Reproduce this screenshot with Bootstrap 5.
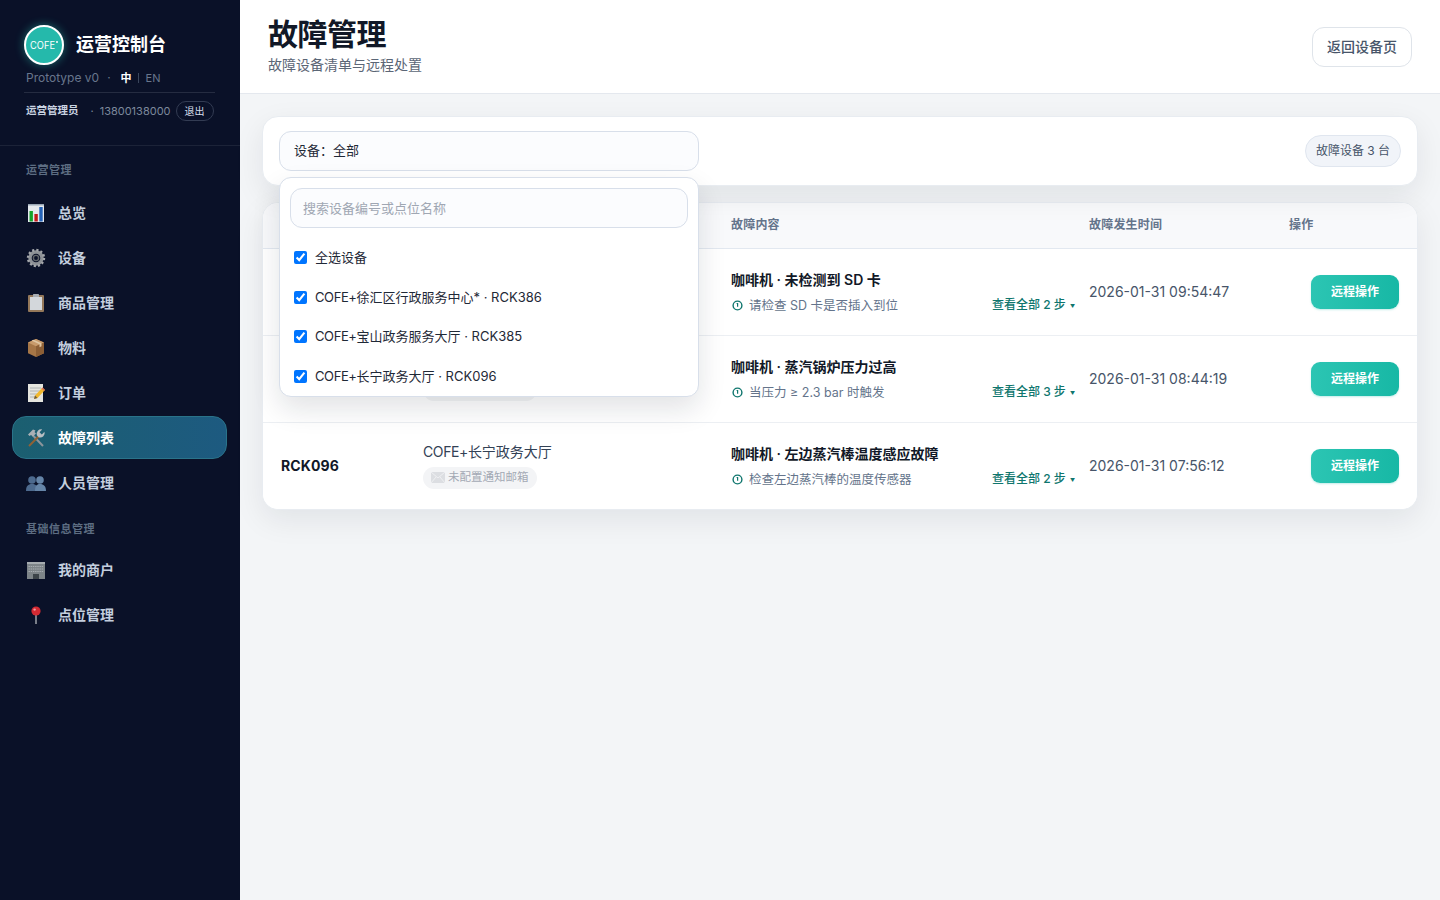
<!doctype html>
<html lang="zh-CN"><head><meta charset="utf-8"><title>故障管理</title>
<link rel="stylesheet" href="https://cdn.jsdelivr.net/npm/bootstrap@5.3.0/dist/css/bootstrap.min.css">
<style>
html,body{height:100%}
body{font-family:Inter,"Noto Sans CJK SC",sans-serif;background:#f3f5f7;color:#111827;min-height:900px;overflow:hidden}
.shell{height:900px}
.side{width:240px;flex:none;background:#0a1128;color:#c3cede}
.brandwrap{height:146px;padding:24px 24px 0;border-bottom:1px solid #1c2338}
.logo{width:40px;height:40px;border-radius:50%;background:#25b9ab;border:2px solid #fff;box-shadow:0 0 10px rgba(45,212,191,.45);flex:none}
.logo text{font-family:Inter,sans-serif;font-size:10px;fill:#fff}
.brandname{font-size:18px;font-weight:700;color:#fff;line-height:42px;margin-left:12px}
.metaline{font-size:12px;color:#68768c;margin-left:2px;height:16px;line-height:16px;margin-top:4px}
.metadot{margin:0 6px 0 8px}
.langcur{color:#fff;font-weight:700;font-size:11px;margin-left:4px}
.langsep{width:1px;height:10px;background:#3a465c;margin:0 7px 0 6px}
.langother{font-size:11px}
.userline{border-top:1px solid #252c41;margin-top:6px;padding:8px 0 0 2px;font-size:11px;width:191px}
.username{color:#c9d3e1;font-size:10.5px;font-weight:600}
.userphone{color:#7d899c;font-size:11px;margin-left:12px;white-space:nowrap}
.userphone b{font-weight:400;margin-right:6px}
.logoutbtn{font-size:10px;color:#d6deea;border:1px solid #333c53;border-radius:10px;width:38px;height:20px;line-height:18px;text-align:center;margin-left:5px;flex:none}
.navgroup{padding:0 13px 0 12px}
.seclabel{font-size:11px;font-weight:700;color:#5d6d82;letter-spacing:.5px;padding-left:14px;line-height:16px}
.sec1{margin-top:16px;margin-bottom:13px}
.sec2{margin-top:17px;margin-bottom:11px}
.navitem{height:43px;margin-bottom:2px;padding:0 14px;display:flex;align-items:center;border:1px solid transparent;border-radius:14px;font-size:14px;font-weight:600;color:#c3cede}
.navitem svg{width:20px;height:20px;margin-right:12px;flex:none;margin-left:-1px}
.navitem.isactive{background:linear-gradient(90deg,#1b5f70,#1d5a80);border-color:#2a7389;color:#fff}
.topbar{height:94px;background:#fff;border-bottom:1px solid #e4e8ee;padding:0 28px}
.pagetitle{font-size:30px;letter-spacing:-.5px;font-weight:700;line-height:36px;margin:16px 0 0;color:#111827}
.pagesub{font-size:14px;color:#5b6676;line-height:20px;margin-top:3px}
.backbtn{width:100px;height:40px;background:#fff;border:1px solid #dfe4ea;border-radius:12px;font-size:14px;font-weight:500;color:#475569;padding:0}
.content{padding:22px 22px 0}
.panel{background:#fff;border:1px solid #e8ecf1;border-radius:16px;box-shadow:0 10px 30px rgba(15,23,42,.08)}
.filterpanel{height:70px;padding:14px 16px 0;position:relative;z-index:5}
.selectbox{width:420px;height:40px;border:1px solid #d8dfea;border-radius:12px;background:#fbfcfe;font-size:13px;padding:0 14px;line-height:37px;color:#1f2937}
.countpill{height:32px;width:96px;text-align:center;line-height:30px;border:1px solid #e0e6ef;background:#f1f4f9;border-radius:16px;font-size:12px;color:#475569;margin-top:4px}
.ddmenu{position:absolute;left:16px;top:60px;width:420px;height:220px;background:#fff;border:1px solid #d8dfea;border-radius:12px;box-shadow:0 12px 28px rgba(15,23,42,.12);padding:10px}
.ddsearch{height:40px;border:1px solid #d8dfea;border-radius:12px;background:#fbfcfe;font-size:13px;padding:0 12px;width:100%;color:#111827;outline:0}
.ddsearch::placeholder{color:#a0a7b3}
.ddopt{font-size:13px;color:#1f2937;height:39.6px;padding-left:4px;margin:0;gap:8px}
.ddopt input{width:13px;height:13px;margin:0}
.ddlist{margin-top:10px}
.cofepre{letter-spacing:-.4px}
.tablepanel{margin-top:16px;overflow:hidden}
.faulttable{width:1154px;table-layout:fixed;margin:0}
.faulttable th{height:45px;background:#f8f9fb;font-size:12px;font-weight:600;color:#64748b;padding:0 7px;border-bottom:1px solid #e2e8f0;vertical-align:middle;letter-spacing:.2px}
.faulttable td{height:87px;padding:0 7px;border-bottom:1px solid #eceff3;vertical-align:middle;background:#fff}
.faulttable tr:last-child td{border-bottom:0}
.faulttable th:first-child,.faulttable td:first-child{padding-left:18px}
.faulttable th:last-child,.faulttable td:last-child{padding-right:18px}
.faulttable td.faultcell{padding-top:2px}
.devcode{font-size:14px;font-weight:700;color:#111827;letter-spacing:.1px}
.locname{font-size:14px;color:#334155;line-height:18px}
.mailpill{display:inline-flex;align-items:center;height:22px;padding:0 8px;background:#f3f4f6;border-radius:11px;font-size:11.5px;color:#a3a9b4;margin-top:6px}
.mailpill svg{width:14px;height:11px;margin-right:3px}
.faulttitle{font-size:14px;font-weight:600;color:#111827;line-height:20px}
.faultsub{font-size:12.5px;color:#64748b;line-height:18px;margin-top:6px}
.faultsub svg{width:11px;height:11px;margin:0 6px 0 1px;flex:none}
.stepslink{font-size:12px;font-weight:500;color:#0f766e;white-space:nowrap}
.stepslink i{font-style:normal;font-size:5px;margin-left:4px;vertical-align:1px}
.timecell{font-size:14px;color:#475569}
.remotebtn{width:88px;height:34px;border:0;border-radius:9px;background:linear-gradient(90deg,#2cc5b3,#17b8a5);color:#fff;font-size:12px;font-weight:700;padding:0;box-shadow:0 1px 2px rgba(20,184,166,.25)}
</style></head>
<body>
<div class="shell d-flex">
<aside class="side d-flex flex-column">
 <div class="brandwrap">
  <div class="d-flex align-items-center">
   <div class="logo d-flex align-items-center justify-content-center"><svg width="34" height="14" viewBox="0 0 34 14"><text x="3" y="11" textLength="25" lengthAdjust="spacingAndGlyphs">COFE</text><circle cx="30" cy="4" r="1" fill="#fff"/></svg></div>
   <div class="brandname">运营控制台</div>
  </div>
  <div class="metaline d-flex align-items-center"><span>Prototype v0</span><span class="metadot">·</span><span class="langcur">中</span><span class="langsep"></span><span class="langother">EN</span></div>
  <div class="userline d-flex align-items-center"><span class="username">运营管理员</span><span class="userphone"><b>·</b>13800138000</span><span class="logoutbtn">退出</span></div>
 </div>
 <nav class="navgroup">
  <div class="seclabel sec1">运营管理</div>
  <div class="navitem"><svg viewBox="0 0 20 20"><rect x="2" y="1" width="16" height="18" fill="#e6eaee"/><rect x="2" y="1" width="16" height="1.5" fill="#9aa7b5"/><rect x="3.5" y="8" width="3.4" height="10.5" fill="#16a32a"/><rect x="8.4" y="11" width="3.4" height="7.5" fill="#c41a1a"/><rect x="13.3" y="4" width="3.4" height="14.5" fill="#2563b8"/></svg>总览</div>
  <div class="navitem"><svg viewBox="0 0 20 20"><circle cx="10" cy="10" r="6" fill="none" stroke="#8d9196" stroke-width="3.4"/><circle cx="10" cy="10" r="8" fill="none" stroke="#a4a7ab" stroke-width="2.4" stroke-dasharray="2.1 2.1"/><circle cx="10" cy="10" r="2.6" fill="none" stroke="#5f6468" stroke-width="1.400"/></svg>设备</div>
  <div class="navitem"><svg viewBox="0 0 20 20"><rect x="2" y="2" width="16" height="17" rx="1" fill="#94785a"/><rect x="4" y="4" width="12" height="13" fill="#d3d7db"/><rect x="7" y="1" width="6" height="3" rx=".6" fill="#a8adb3"/></svg>商品管理</div>
  <div class="navitem"><svg viewBox="0 0 20 20"><path d="M10 1l8 3.600v10.600L10 19l-8-3.800V4.600z" fill="#a67647"/><path d="M10 1l8 3.600-8 3.600-8-3.600z" fill="#c89b6c"/><path d="M10 8.200V19l8-3.800V4.600z" fill="#8c5f36"/><path d="M5.500 2.600l8 3.600v3l2-.9v-3l-8-3.600z" fill="#dfc6a3"/></svg>物料</div>
  <div class="navitem"><svg viewBox="0 0 20 20"><rect x="2" y="1" width="15" height="18" fill="#e5e5df"/><path d="M4 5h11M4 8h11M4 11h7M4 14h5" stroke="#a5a8aa" stroke-width=".8"/><path d="M8 16l1-3.500 7.500-8 2.500 2.400-7.500 8z" fill="#f1b82d"/><path d="M15.500 5.500l1-1 2.500 2.400-1 1z" fill="#d8685f"/><path d="M8 16l1-3.500 2.500 2.400z" fill="#6b5a3d"/></svg>订单</div>
  <div class="navitem isactive"><svg viewBox="0 0 20 20"><path d="M17 18L6.500 7" stroke="#8c959b" stroke-width="2"/><path d="M2 6.500L7 1.500l2.500 1-1 1.500 1.500 1.500-3 3-2-1.500-1.500 1z" fill="#a9b0b5"/><path d="M3 18l10.500-10.500" stroke="#8f6236" stroke-width="2"/><path d="M18.500 3.800l-2.700 2.700-2.300-2.300 2.700-2.700a4.500 4.500 0 00-5.300 5.800l2 2.100a4.500 4.500 0 005.600-5.600z" fill="#b7bec3"/></svg>故障列表</div>
  <div class="navitem"><svg viewBox="0 0 20 20"><g fill="#4d6a8e"><circle cx="6" cy="7" r="3.800"/><path d="M0 18c0-5 2-7 6-7s6 2 6 7z"/></g><g fill="#6585a8"><circle cx="14" cy="7" r="3.800"/><path d="M9 18c0-5 1.500-7 5-7s6 2 6 7z"/></g></svg>人员管理</div>
  <div class="seclabel sec2">基础信息管理</div>
  <div class="navitem"><svg viewBox="0 0 20 20"><rect x="1" y="2" width="18" height="17" fill="#7d8488"/><rect x="1" y="2" width="18" height="2" fill="#a6acb0"/><path d="M2.500 6.500h15M2.500 9h15M2.500 11.500h15" stroke="#a9aeb2" stroke-width="1" stroke-dasharray="1.400 .8"/><rect x="7" y="14" width="6" height="5" fill="#3c4449"/></svg>我的商户</div>
  <div class="navitem"><svg viewBox="0 0 20 20"><path d="M10 9v10" stroke="#a8adb2" stroke-width="1.400"/><circle cx="10" cy="6" r="4.600" fill="#d42a33"/><circle cx="8.600" cy="4.600" r="1.200" fill="#f09aa0"/></svg>点位管理</div>
 </nav>
</aside>
<main class="flex-grow-1 d-flex flex-column">
 <header class="topbar d-flex justify-content-between align-items-center">
  <div class="align-self-start"><h1 class="pagetitle">故障管理</h1><div class="pagesub">故障设备清单与远程处置</div></div>
  <button class="backbtn" type="button">返回设备页</button>
 </header>
 <div class="content">
  <section class="panel filterpanel d-flex justify-content-between">
   <div class="selectbox">设备：全部</div>
   <div class="countpill">故障设备 3 台</div>
   <div class="ddmenu">
    <input class="ddsearch" placeholder="搜索设备编号或点位名称">
    <div class="ddlist">
     <label class="ddopt d-flex align-items-center"><input type="checkbox" checked>全选设备</label>
     <label class="ddopt d-flex align-items-center"><input type="checkbox" checked><span><span class="cofepre">COFE+</span>徐汇区行政服务中心* · RCK386</span></label>
     <label class="ddopt d-flex align-items-center"><input type="checkbox" checked><span><span class="cofepre">COFE+</span>宝山政务服务大厅 · RCK385</span></label>
     <label class="ddopt d-flex align-items-center"><input type="checkbox" checked><span><span class="cofepre">COFE+</span>长宁政务大厅 · RCK096</span></label>
    </div>
   </div>
  </section>
  <section class="panel tablepanel">
   <table class="table faulttable">
    <colgroup><col style="width:153px"><col style="width:308px"><col style="width:358px"><col style="width:200px"><col style="width:135px"></colgroup>
    <thead><tr><th>设备编号</th><th>点位名称</th><th>故障内容</th><th>故障发生时间</th><th>操作</th></tr></thead>
    <tbody>
     <tr><td class="devcode">RCK386</td><td><div class="locname"><span class="cofepre">COFE+</span>徐汇区行政服务中心*</div><span class="mailpill"><svg viewBox="0 0 14 11"><rect width="14" height="11" fill="#dcdee2"/><path d="M0 0l7 6 7-6M0 11l5-6M14 11L9 5" stroke="#f3f4f6" fill="none" stroke-width=".8"/></svg>未配置通知邮箱</span></td>
      <td class="faultcell"><div class="faulttitle">咖啡机 · 未检测到 SD 卡</div><div class="faultsub d-flex align-items-center"><svg viewBox="0 0 11 11"><circle cx="5.500" cy="5.500" r="4.400" fill="none" stroke="#0f766e" stroke-width="1.400"/><path d="M4.600 3.500h1v3.200" stroke="#0f766e" fill="none" stroke-width="1.200"/></svg><span class="flex-grow-1">请检查 SD 卡是否插入到位</span><span class="stepslink">查看全部 2 步<i>▼</i></span></div></td>
      <td class="timecell">2026-01-31 09:54:47</td><td class="text-end"><button class="remotebtn" type="button">远程操作</button></td></tr>
     <tr><td class="devcode">RCK385</td><td><div class="locname"><span class="cofepre">COFE+</span>宝山政务服务大厅</div><span class="mailpill"><svg viewBox="0 0 14 11"><rect width="14" height="11" fill="#dcdee2"/><path d="M0 0l7 6 7-6M0 11l5-6M14 11L9 5" stroke="#f3f4f6" fill="none" stroke-width=".8"/></svg>未配置通知邮箱</span></td>
      <td class="faultcell"><div class="faulttitle">咖啡机 · 蒸汽锅炉压力过高</div><div class="faultsub d-flex align-items-center"><svg viewBox="0 0 11 11"><circle cx="5.500" cy="5.500" r="4.400" fill="none" stroke="#0f766e" stroke-width="1.400"/><path d="M4.600 3.500h1v3.200" stroke="#0f766e" fill="none" stroke-width="1.200"/></svg><span class="flex-grow-1">当压力 ≥ 2.3 bar 时触发</span><span class="stepslink">查看全部 3 步<i>▼</i></span></div></td>
      <td class="timecell">2026-01-31 08:44:19</td><td class="text-end"><button class="remotebtn" type="button">远程操作</button></td></tr>
     <tr><td class="devcode">RCK096</td><td><div class="locname"><span class="cofepre">COFE+</span>长宁政务大厅</div><span class="mailpill"><svg viewBox="0 0 14 11"><rect width="14" height="11" fill="#dcdee2"/><path d="M0 0l7 6 7-6M0 11l5-6M14 11L9 5" stroke="#f3f4f6" fill="none" stroke-width=".8"/></svg>未配置通知邮箱</span></td>
      <td class="faultcell"><div class="faulttitle">咖啡机 · 左边蒸汽棒温度感应故障</div><div class="faultsub d-flex align-items-center"><svg viewBox="0 0 11 11"><circle cx="5.500" cy="5.500" r="4.400" fill="none" stroke="#0f766e" stroke-width="1.400"/><path d="M4.600 3.500h1v3.200" stroke="#0f766e" fill="none" stroke-width="1.200"/></svg><span class="flex-grow-1">检查左边蒸汽棒的温度传感器</span><span class="stepslink">查看全部 2 步<i>▼</i></span></div></td>
      <td class="timecell">2026-01-31 07:56:12</td><td class="text-end"><button class="remotebtn" type="button">远程操作</button></td></tr>
    </tbody>
   </table>
  </section>
 </div>
</main>
</div>
<script src="https://cdn.jsdelivr.net/npm/bootstrap@5.3.0/dist/js/bootstrap.bundle.min.js"></script>
</body></html>
